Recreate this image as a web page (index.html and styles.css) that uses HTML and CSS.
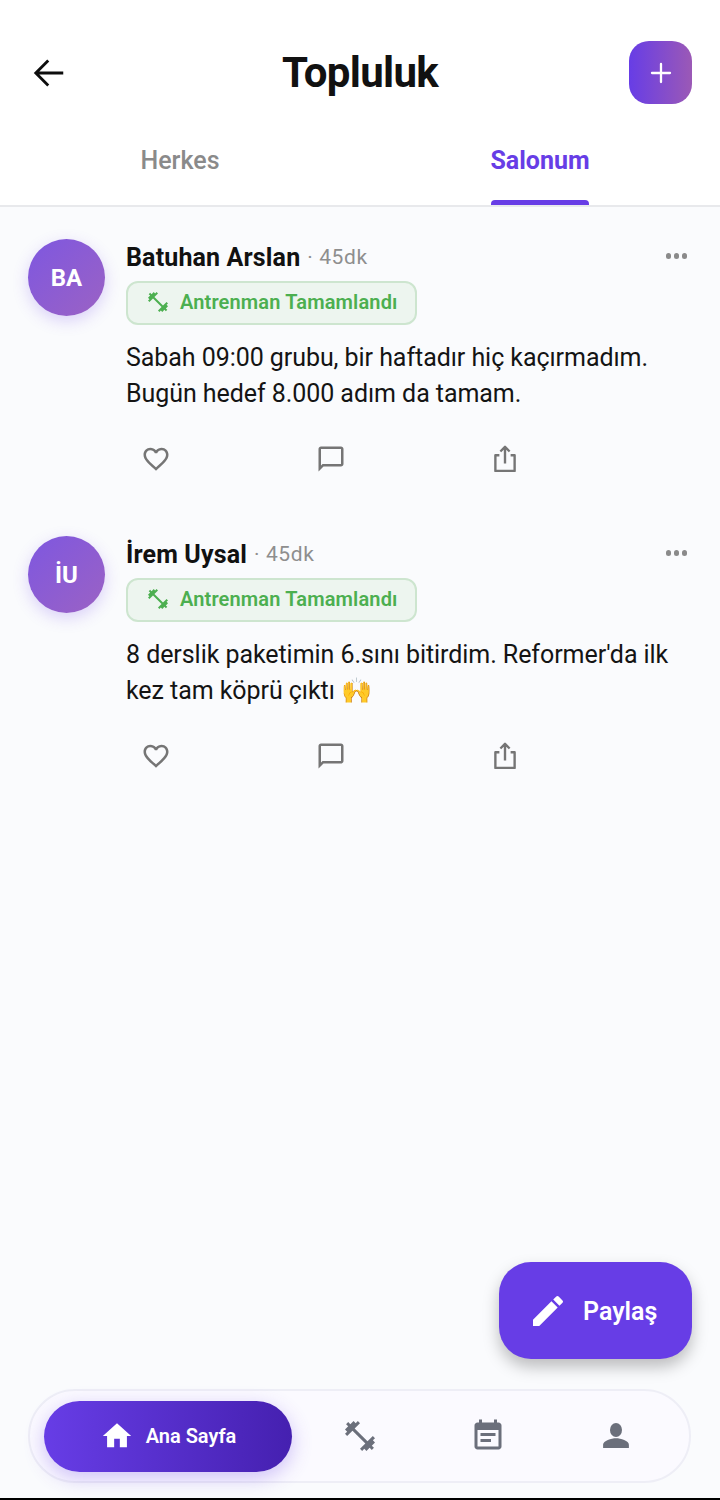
FILE: index.html
```html
<!DOCTYPE html>
<html lang="tr">
<head>
  <meta charset="UTF-8">
  <meta name="viewport" content="width=device-width, initial-scale=1.0">
  <title>Topluluk</title>
  <link rel="stylesheet" href="styles.css">
</head>
<body>
  <div class="page">
    <header class="top">
      <div class="title-row">
        <button class="back" aria-label="Geri">
          <svg width="36" height="36" viewBox="0 0 24 24"><path d="M21.5 12H3.5M11.500 3.700L3.200 12l8.300 8.300" fill="none" stroke="#0d0d0d" stroke-width="1.900"/></svg>
        </button>
        <h1>Topluluk</h1>
        <button class="add" aria-label="Ekle">
          <svg width="24" height="24" viewBox="0 0 24 24"><path d="M12 3v18M3 12h18" fill="none" stroke="#fff" stroke-width="2.300" stroke-linecap="round"/></svg>
        </button>
      </div>
      <nav class="tabs">
        <a class="tab">Herkes</a>
        <a class="tab active">Salonum</a>
      </nav>
    </header>

    <main class="feed">
      <article class="post">
        <div class="avatar">BA</div>
        <div class="post-body">
          <div class="post-head">
            <span class="name">Batuhan Arslan</span>
            <span class="time">· 45dk</span>
            <span class="more"><i></i><i></i><i></i></span>
          </div>
          <div class="badge">
            <svg width="24" height="24" viewBox="0 0 24 24"><path fill="#4caf50" d="M20.57 14.86L22 13.43 20.57 12 17 15.57 8.43 7 12 3.43 10.57 2 9.14 3.43 7.71 2 5.57 4.14 4.14 2.71 2.71 4.14l1.43 1.43L2 7.71l1.43 1.43L2 10.57 3.43 12 7 8.43 15.57 17 12 20.57 13.43 22l1.43-1.43L16.29 22l2.14-2.14 1.43 1.43 1.43-1.43-1.43-1.43L22 16.29z"/></svg>
            <span>Antrenman Tamamlandı</span>
          </div>
          <p class="text">Sabah 09:00 grubu, bir haftadır hiç kaçırmadım. Bugün hedef 8.000 adım da tamam.</p>
          <div class="actions">
            <button class="act"><svg width="30" height="30" viewBox="0 0 24 24"><path fill="#757575" d="M16.5 3c-1.74 0-3.41.81-4.5 2.09C10.91 3.81 9.24 3 7.5 3 4.42 3 2 5.42 2 8.5c0 3.78 3.4 6.86 8.55 11.54L12 21.35l1.45-1.32C18.6 15.36 22 12.28 22 8.5 22 5.42 19.58 3 16.5 3zm-4.4 15.55l-.1.1-.1-.1C7.14 14.24 4 11.39 4 8.5 4 6.5 5.5 5 7.5 5c1.54 0 3.04.99 3.57 2.36h1.87C13.46 5.99 14.96 5 16.5 5c2 0 3.5 1.5 3.5 3.5 0 2.89-3.14 5.74-7.9 10.05z"/></svg></button>
            <button class="act"><svg width="30" height="30" viewBox="0 0 24 24"><path fill="#757575" d="M20 2H4c-1.1 0-2 .9-2 2v18l4-4h14c1.1 0 2-.9 2-2V4c0-1.1-.9-2-2-2zm0 14H5.2L4 17.2V4h16v12z"/></svg></button>
            <button class="act"><svg width="30" height="30" viewBox="0 0 24 24"><path fill="none" stroke="#757575" stroke-width="1.900" stroke-linejoin="round" d="M7.500 9H4.300v12.500h15.400V9h-3.200M12 15.500V2.500M8.300 6L12 2.300 15.700 6"/></svg></button>
          </div>
        </div>
      </article>

      <article class="post">
        <div class="avatar">İU</div>
        <div class="post-body">
          <div class="post-head">
            <span class="name">İrem Uysal</span>
            <span class="time">· 45dk</span>
            <span class="more"><i></i><i></i><i></i></span>
          </div>
          <div class="badge">
            <svg width="24" height="24" viewBox="0 0 24 24"><path fill="#4caf50" d="M20.57 14.86L22 13.43 20.57 12 17 15.57 8.43 7 12 3.43 10.57 2 9.14 3.43 7.71 2 5.57 4.14 4.14 2.71 2.71 4.14l1.43 1.43L2 7.71l1.43 1.43L2 10.57 3.43 12 7 8.43 15.57 17 12 20.57 13.43 22l1.43-1.43L16.29 22l2.14-2.14 1.43 1.43 1.43-1.43-1.43-1.43L22 16.29z"/></svg>
            <span>Antrenman Tamamlandı</span>
          </div>
          <p class="text">8 derslik paketimin 6.sını bitirdim. Reformer'da ilk kez tam köprü çıktı 🙌</p>
          <div class="actions">
            <button class="act"><svg width="30" height="30" viewBox="0 0 24 24"><path fill="#757575" d="M16.5 3c-1.74 0-3.41.81-4.5 2.09C10.91 3.81 9.24 3 7.5 3 4.42 3 2 5.42 2 8.5c0 3.78 3.4 6.86 8.55 11.54L12 21.35l1.45-1.32C18.6 15.36 22 12.28 22 8.5 22 5.42 19.58 3 16.5 3zm-4.4 15.55l-.1.1-.1-.1C7.14 14.24 4 11.39 4 8.5 4 6.5 5.5 5 7.5 5c1.54 0 3.04.99 3.57 2.36h1.87C13.46 5.99 14.96 5 16.5 5c2 0 3.5 1.5 3.5 3.5 0 2.89-3.14 5.74-7.9 10.05z"/></svg></button>
            <button class="act"><svg width="30" height="30" viewBox="0 0 24 24"><path fill="#757575" d="M20 2H4c-1.1 0-2 .9-2 2v18l4-4h14c1.1 0 2-.9 2-2V4c0-1.1-.9-2-2-2zm0 14H5.2L4 17.2V4h16v12z"/></svg></button>
            <button class="act"><svg width="30" height="30" viewBox="0 0 24 24"><path fill="none" stroke="#757575" stroke-width="1.900" stroke-linejoin="round" d="M7.500 9H4.300v12.500h15.400V9h-3.200M12 15.500V2.500M8.300 6L12 2.300 15.700 6"/></svg></button>
          </div>
        </div>
      </article>
    </main>

    <button class="fab">
      <svg width="40" height="40" viewBox="0 0 24 24"><path fill="#fff" d="M3 17.25V21h3.75L17.81 9.94l-3.75-3.75L3 17.25zM20.71 7.04a1 1 0 0 0 0-1.41l-2.34-2.34a1 1 0 0 0-1.41 0l-1.83 1.83 3.75 3.75 1.83-1.83z"/></svg>
      <span>Paylaş</span>
    </button>

    <nav class="bottom-nav">
      <a class="nav-item active">
        <svg width="34" height="34" viewBox="0 0 24 24"><path fill="#fff" d="M10 20v-6h4v6h5v-8h3L12 3 2 12h3v8z"/></svg>
        <span>Ana Sayfa</span>
      </a>
      <a class="nav-item">
        <svg width="36" height="36" viewBox="0 0 24 24"><path fill="#6b6f7b" d="M20.57 14.86L22 13.43 20.57 12 17 15.57 8.43 7 12 3.43 10.57 2 9.14 3.43 7.71 2 5.57 4.14 4.14 2.71 2.71 4.14l1.43 1.43L2 7.71l1.43 1.43L2 10.57 3.43 12 7 8.43 15.57 17 12 20.57 13.43 22l1.43-1.43L16.29 22l2.14-2.14 1.43 1.43 1.43-1.43-1.43-1.43L22 16.29z"/></svg>
      </a>
      <a class="nav-item">
        <svg width="36" height="36" viewBox="0 0 24 24"><path fill="#6b6f7b" d="M19 3h-1V1h-2v2H8V1H6v2H5c-1.1 0-2 .9-2 2v14c0 1.1.9 2 2 2h14c1.1 0 2-.9 2-2V5c0-1.1-.9-2-2-2zm0 16H5V8h14v11zM7 10h10v2H7zm0 4h7v2H7z"/></svg>
      </a>
      <a class="nav-item">
        <svg width="36" height="36" viewBox="0 0 24 24"><ellipse cx="12" cy="8" rx="4" ry="4.700" fill="#6b6f7b"/><path fill="#6b6f7b" d="M3.400 20v-2.200c0-2.600 5.500-4.300 8.600-4.300s8.600 1.700 8.600 4.300V20z"/></svg>
      </a>
    </nav>
    <div class="strip"></div>
  </div>
</body>
</html>
```

FILE: styles.css
```css
/* page frame */
* {
  box-sizing: border-box;
}

body {
  margin: 0;
  padding: 0;
  font-family: Roboto, "Noto Sans", sans-serif;
  background: #fafbfd;
}

.page {
  position: relative;
  display: flex;
  flex-direction: column;
  width: 720px;
  height: 1500px;
  overflow: hidden;
}

button {
  border: none;
  background: none;
  padding: 0;
  font-family: inherit;
}

/* header and tabs */
.top {
  background: #fff;
  border-bottom: 2px solid #e8e9ec;
}

.title-row {
  display: grid;
  grid-template-columns: 1fr auto 1fr;
  align-items: center;
  height: 104px;
  padding: 41px 28px 0 31px;
}

.back {
  display: flex;
  width: 36px;
  height: 36px;
}

h1 {
  margin: 0 0 0 -3px;
  font-size: 42px;
  font-weight: 700;
  letter-spacing: -0.7px;
  color: #111;
}

.add {
  display: flex;
  align-items: center;
  justify-content: center;
  justify-self: end;
  width: 63px;
  height: 63px;
  border-radius: 20px;
  background: linear-gradient(90deg, #673de6, #9b59b6);
}

.tabs {
  display: flex;
  height: 101px;
}

.tab {
  position: relative;
  flex: 1;
  padding-top: 42px;
  text-align: center;
  font-size: 25px;
  font-weight: 500;
  line-height: 30px;
  color: #8a8a8a;
}

.tab.active {
  font-weight: 700;
  color: #673de6;
}

.tab.active::after {
  content: "";
  position: absolute;
  left: 131px;
  right: 131px;
  bottom: 0;
  height: 5px;
  border-radius: 4px 4px 0 0;
  background: #673de6;
}

/* posts */
.feed {
  flex: 1;
  padding-top: 32px;
}

.post {
  display: flex;
  gap: 21px;
  height: 297px;
  padding: 0 28px;
}

.avatar {
  display: flex;
  flex-shrink: 0;
  align-items: center;
  justify-content: center;
  width: 77px;
  height: 77px;
  border-radius: 50%;
  background: linear-gradient(135deg, #7e57e0, #9b62c4);
  box-shadow: 0 5px 16px rgba(103, 61, 230, 0.22);
  color: #fff;
  font-size: 24px;
  font-weight: 700;
}

.post-body {
  flex: 1;
}

.post-head {
  display: flex;
  align-items: center;
  gap: 7px;
  height: 36px;
}

.name {
  font-size: 25px;
  font-weight: 700;
  letter-spacing: 0.15px;
  color: #111;
}

.time {
  font-size: 21px;
  letter-spacing: 0.6px;
  color: #8e8e8e;
}

.more {
  display: flex;
  gap: 2.5px;
  margin-left: auto;
  padding: 0 5px 2px 0;
}

.more i {
  width: 5.5px;
  height: 5.5px;
  border-radius: 50%;
  background: #8a8a8a;
}

.badge {
  display: inline-flex;
  align-items: center;
  gap: 10px;
  height: 44px;
  margin-top: 6px;
  padding: 0 17px 2px 18px;
  border: 2px solid #cde5cf;
  border-radius: 12px;
  background: #edf5ef;
  color: #4caf50;
  font-size: 20px;
  font-weight: 600;
  letter-spacing: 0.15px;
}

.text {
  margin: 15px 0 0;
  font-size: 25px;
  line-height: 36px;
  letter-spacing: -0.06px;
  color: #141414;
}

.actions {
  display: flex;
  margin-top: 32px;
}

.act {
  display: flex;
  width: 174.5px;
  padding-left: 15px;
}

/* floating share button */
.fab {
  position: absolute;
  top: 1262px;
  left: 499px;
  display: flex;
  align-items: center;
  gap: 15px;
  width: 193px;
  height: 97px;
  padding-left: 29px;
  border-radius: 32px;
  background: #673de6;
  box-shadow: 0 8px 16px rgba(0, 0, 0, 0.25);
  color: #fff;
  font-size: 25px;
  font-weight: 600;
}

.fab span {
  padding-top: 2px;
}

/* bottom navigation */
.bottom-nav {
  display: flex;
  align-items: center;
  height: 94px;
  margin: 0 29px 15px 28px;
  padding-left: 14px;
  border: 2px solid #eeeef6;
  border-radius: 47px;
  background: #fbfaff;
}

.nav-item {
  display: flex;
  flex-shrink: 0;
  align-items: center;
  justify-content: center;
  width: 128px;
  height: 71px;
}

.nav-item.active {
  gap: 12px;
  width: 248px;
  margin-right: 4px;
  border-radius: 36px;
  background: linear-gradient(90deg, #673de6, #4520b0);
  box-shadow: 0 6px 20px rgba(103, 61, 230, 0.3);
  color: #fff;
  font-size: 20px;
  font-weight: 600;
}

.strip {
  height: 2px;
  background: #000;
}
```
